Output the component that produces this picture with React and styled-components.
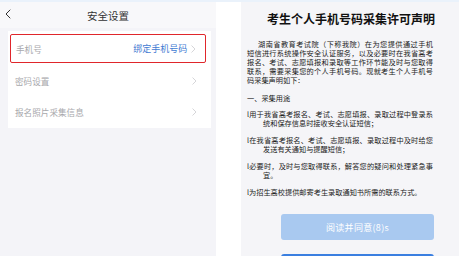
import styled, { createGlobalStyle } from 'styled-components';

const GlobalStyle = createGlobalStyle`
  html, body {
    margin: 0;
    padding: 0;
    background: #ffffff;
  }
  body {
    font-family: "Noto Sans CJK SC", "Noto Sans", sans-serif;
  }
`;

const rows = [
  { label: '手机号', value: '绑定手机号码', active: true },
  { label: '密码设置' },
  { label: '报名照片采集信息' },
];

// 声明正文，按截图断行
const intro = [
  '湖南省教育考试院（下称我院）在为您提供通过手机',
  '短信进行系统操作安全认证服务，以及必要时在我省高考',
  '报名、考试、志愿填报和录取等工作环节能及时与您取得',
  '联系，需要采集您的个人手机号码。现就考生个人手机号',
  '码采集声明如下：',
];

const items = [
  ['l用于我省高考报名、考试、志愿填报、录取过程中登录系', '统和保存信息时接收安全认证短信；'],
  ['l在我省高考报名、考试、志愿填报、录取过程中及时给您', '发送有关通知与提醒短信；'],
  ['l必要时，及时与您取得联系，解答您的疑问和处理紧急事', '宜。'],
  ['l为招生高校提供邮寄考生录取通知书所需的联系方式。'],
];

function Chevron({ color = '#c4c4c8', size = 8 }) {
  return (
    <svg width={size * 0.6} height={size} viewBox="0 0 6 10" fill="none">
      <path d="M1 1l4 4-4 4" stroke={color} strokeWidth="0.9" strokeLinecap="round" strokeLinejoin="round" />
    </svg>
  );
}

export default function App() {
  return (
    <>
      <GlobalStyle />
      <StPage>
        <StLeft>
          <StHeader>
            <StBack>
              <svg width="6" height="10" viewBox="0 0 6 10" fill="none">
                <path d="M5 1L1 5l4 4" stroke="#333" strokeWidth="1" strokeLinecap="round" strokeLinejoin="round" />
              </svg>
            </StBack>
            <h1>安全设置</h1>
          </StHeader>
          <StCard>
            {rows.map((row) => (
              <StRow key={row.label} $active={row.active}>
                <span className="label">{row.label}</span>
                <StRowRight>
                  {row.value && <span className="value">{row.value}</span>}
                  <Chevron />
                </StRowRight>
              </StRow>
            ))}
          </StCard>
        </StLeft>
        <StSpacer />
        <StRight>
          <StTitle>考生个人手机号码采集许可声明</StTitle>
          <StBody>
            <StBlock>
              {intro.map((line, i) => (
                <StLine key={line} $indent={i === 0 ? 11 : 0} $last={i === intro.length - 1}>
                  {line}
                </StLine>
              ))}
            </StBlock>
            <StSection>一、采集用途</StSection>
            {items.map((lines) => (
              <StItem key={lines[0]}>
                {lines.map((line, i) => (
                  <StLine key={line} $indent={i === 0 ? 0 : 16} $last={i === lines.length - 1}>
                    {line}
                  </StLine>
                ))}
              </StItem>
            ))}
          </StBody>
          <StButton>阅读并同意(8)s</StButton>
          <StButton $primary />
        </StRight>
      </StPage>
    </>
  );
}

const StPage = styled.div`
  display: flex;
  width: 459px;
  height: 256px;
  overflow: hidden;
  border-top: 2px solid #eaf2fb;
  box-sizing: border-box;
`;
const StLeft = styled.div`
  width: 216px;
  flex-shrink: 0;
  background: #f4f4f8;
`;
const StHeader = styled.div`
  position: relative;
  height: 26px;
  background: #f8f8fa;
  display: flex;
  align-items: center;
  justify-content: center;
  h1 {
    margin: 0;
    font-size: 10.5px;
    font-weight: 400;
    color: #333;
  }
`;
const StBack = styled.div`
  position: absolute;
  left: 5px;
  top: 7px;
  display: flex;
`;
const StCard = styled.div`
  margin: 3px 5px 0 8px;
  background: #ffffff;
  padding: 3px 0 1px;
`;
const StRow = styled.div`
  display: flex;
  align-items: center;
  justify-content: space-between;
  height: ${(p) => (p.$active ? '27px' : '31px')};
  margin: ${(p) => (p.$active ? '0 5px 2px 2px' : '0 7px 0 2px')};
  padding: 0 ${(p) => (p.$active ? '9px' : '7px')} 0 5px;
  border: ${(p) => (p.$active ? '1.5px solid #e0262b' : 'none')};
  border-radius: 2px;
  .label {
    font-size: 8.6px;
    color: #a8a8ac;
  }
  .value {
    font-size: 9px;
    color: #3f7bd2;
  }
`;
const StRowRight = styled.div`
  display: flex;
  align-items: center;
  gap: 4px;
`;
const StSpacer = styled.div`
  width: 25px;
  flex-shrink: 0;
  background: #ffffff;
`;
const StRight = styled.div`
  flex: 1;
  background: #f5f5f8;
  padding: 10px 0 0 6px;
  display: flex;
  flex-direction: column;
`;
const StTitle = styled.h2`
  margin: 0 0 0 20px;
  width: 170px;
  font-size: 12px;
  line-height: 14px;
  font-weight: 700;
  color: #111;
  white-space: nowrap;
`;
const StBody = styled.div`
  width: 186px;
  margin-top: 14px;
  font-size: 7.2px;
  line-height: 9px;
  color: #222;
`;
const StBlock = styled.div``;
const StLine = styled.div`
  padding-left: ${(p) => p.$indent}px;
  text-align: justify;
  text-align-last: ${(p) => (p.$last ? 'left' : 'justify')};
`;
const StSection = styled.div`
  margin: 9px 0 7px;
`;
const StItem = styled.div`
  margin-bottom: 8px;
`;
const StButton = styled.div`
  flex-shrink: 0;
  width: 153px;
  height: 26px;
  margin: ${(p) => (p.$primary ? '14px' : '9px')} 0 0 34px;
  border-radius: 3px;
  background: ${(p) => (p.$primary ? '#3a7fe0' : '#a9c9f0')};
  color: #ffffff;
  font-size: 9px;
  display: flex;
  align-items: center;
  justify-content: center;
  letter-spacing: 0.3px;
`;
